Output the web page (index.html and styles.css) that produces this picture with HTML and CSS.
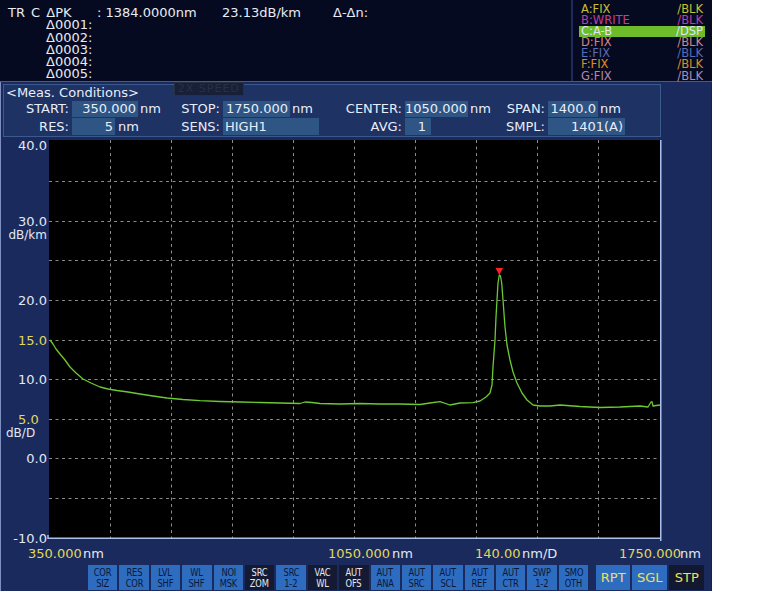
FILE: index.html
```html
<!DOCTYPE html>
<html>
<head>
<meta charset="utf-8">
<link rel="stylesheet" href="styles.css">
</head>
<body>
<div class="screen">
  <header class="top">
    <div class="markers">
      <div class="mrow"><span class="m1">TR C ΔPK</span><span class="m2">: 1384.0000nm</span><span class="m3">23.13dB/km</span><span>Δ-Δn:</span></div>
      <div class="mrow sub">Δ0001:</div>
      <div class="mrow sub">Δ0002:</div>
      <div class="mrow sub">Δ0003:</div>
      <div class="mrow sub">Δ0004:</div>
      <div class="mrow sub">Δ0005:</div>
    </div>
    <div class="traces">
      <div class="tr ta"><span>A:FIX</span><span>/BLK</span></div>
      <div class="tr tb"><span>B:WRITE</span><span>/BLK</span></div>
      <div class="tr tc"><span>C:A-B</span><span>/DSP</span></div>
      <div class="tr td"><span>D:FIX</span><span>/BLK</span></div>
      <div class="tr te"><span>E:FIX</span><span>/BLK</span></div>
      <div class="tr tf"><span>F:FIX</span><span>/BLK</span></div>
      <div class="tr tg"><span>G:FIX</span><span>/BLK</span></div>
    </div>
  </header>

  <section class="cond">
    <div class="ctitle"><span>&lt;Meas. Conditions&gt;</span><span class="speed">2X SPEED</span></div>
    <div class="crow row1">
      <span class="lab">START:</span><span class="val">350.000</span><span class="unit">nm</span>
      <span class="lab">STOP:</span><span class="val">1750.000</span><span class="unit">nm</span>
      <span class="lab">CENTER:</span><span class="val">1050.000</span><span class="unit">nm</span>
      <span class="lab">SPAN:</span><span class="val">1400.0</span><span class="unit">nm</span>
    </div>
    <div class="crow row2">
      <span class="lab">RES:</span><span class="val">5</span><span class="unit">nm</span>
      <span class="lab">SENS:</span><span class="val left">HIGH1</span>
      <span class="lab">AVG:</span><span class="val center">1</span>
      <span class="lab">SMPL:</span><span class="val">1401(A)</span>
    </div>
  </section>

  <svg class="chart" width="712" height="425" viewBox="0 0 712 425">
    <g transform="translate(0,2)">
    <rect class="plotbg" x="49" y="0" width="611" height="398"/>
    <path class="grid" d="M49 41.5H660M49 81.5H660M49 120.5H660M49 160.5H660M49 200.5H660M49 239.5H660M49 279.5H660M49 318.5H660M49 358.5H660"/>
    <path class="grid" d="M110.5 0V398M171.5 0V398M232.5 0V398M293.5 0V398M354.5 0V398M415.5 0V398M476.5 0V398M537.5 0V398M598.5 0V398"/>
    <polyline class="trace" points="50,200 53,204 56,209 60,214 65,220 70,227 76,233 83,239 91,243 100,247 108,249 117,250.5 128,252 140,254 153,256 167,258 183,259.5 200,260.7 220,261.5 240,262 260,262.5 280,263 300,263.5 305,262 312,262.5 320,263.5 340,264 360,263.5 380,264 400,264 420,264.5 430,263 440,261.7 450,265 460,263 473,262.7 480,261 486,257 490,253 492,245 493,227 495,200 496,177 497,160 498,143 499.3,135 500.5,136 501.7,143 503,160 505,187 507,205 510,220 513,232 517,243 522,253 527,260 533,265 540,266 550,266 560,265 580,266.5 600,267.5 620,267 640,266 648,267 651,262 652,261.7 653,266 660,265"/>
    <polygon class="mark" points="495.5,128 503,128 499.3,135"/>
    <path class="frame" d="M660.75 0V401"/>
    <path class="frame" d="M48 395V398.25H661"/>

    <text class="yl" x="47" y="9.7">40.0</text>
    <text class="yl" x="47" y="85.7">30.0</text>
    <text class="yu" x="47" y="98.7">dB/km</text>
    <text class="yl" x="47" y="164.7">20.0</text>
    <text class="yl yel" x="47" y="204.7">15.0</text>
    <text class="yl" x="47" y="244.2">10.0</text>
    <text class="ys yel" x="18" y="283.7">5.0</text>
    <text class="ys small" x="6" y="296.7">dB/D</text>
    <text class="yl" x="47" y="322.7">0.0</text>
    <text class="yl" x="47" y="402.7">-10.0</text>

    <text class="xl" y="417.7"><tspan class="yel" x="28">350.000</tspan><tspan x="83">nm</tspan></text>
    <text class="xl" y="417.7"><tspan class="yel" x="328">1050.000</tspan><tspan x="392">nm</tspan></text>
    <text class="xl" y="417.7"><tspan class="yel" x="475">140.00</tspan><tspan x="522">nm/D</tspan></text>
    <text class="xl" y="417.7"><tspan class="yel" x="619">1750.000</tspan><tspan x="680">nm</tspan></text>
    </g>
  </svg>

  <nav class="btnrow">
    <div class="btn"><span>COR</span><span>SIZ</span></div>
    <div class="btn"><span>RES</span><span>COR</span></div>
    <div class="btn"><span>LVL</span><span>SHF</span></div>
    <div class="btn"><span>WL</span><span>SHF</span></div>
    <div class="btn"><span>NOI</span><span>MSK</span></div>
    <div class="btn dark"><span>SRC</span><span>ZOM</span></div>
    <div class="btn"><span>SRC</span><span>1-2</span></div>
    <div class="btn dark"><span>VAC</span><span>WL</span></div>
    <div class="btn dark"><span>AUT</span><span>OFS</span></div>
    <div class="btn"><span>AUT</span><span>ANA</span></div>
    <div class="btn"><span>AUT</span><span>SRC</span></div>
    <div class="btn"><span>AUT</span><span>SCL</span></div>
    <div class="btn"><span>AUT</span><span>REF</span></div>
    <div class="btn"><span>AUT</span><span>CTR</span></div>
    <div class="btn"><span>SWP</span><span>1-2</span></div>
    <div class="btn"><span>SMO</span><span>OTH</span></div>
    <div class="big rpt">RPT</div>
    <div class="big">SGL</div>
    <div class="big dark">STP</div>
  </nav>
</div>
</body>
</html>
```

FILE: styles.css
```css
* { box-sizing: border-box; margin: 0; padding: 0; }

body {
  background: #ffffff;
  width: 782px;
  height: 592px;
  overflow: hidden;
  font-family: "DejaVu Sans", Verdana, sans-serif;
}

.screen {
  width: 712px;
  height: 591px;
  background: #1a2a5c;
  box-shadow: inset 1px 0 0 #7d8fbf, inset -1px 0 0 #16224a;
  display: flex;
  flex-direction: column;
}

/* ---------- header ---------- */
.top {
  display: flex;
  height: 82px;
  flex: none;
  background: #0a1132;
  border-bottom: 1px solid #3f5b8f;
}

.markers {
  width: 573px;
  background: #060a20;
  border-right: 2px solid #1d2b58;
  color: #e8ecf4;
  font-size: 13px;
  line-height: 12.3px;
  padding: 7px 0 0 8px;
}

.mrow { display: flex; white-space: pre; word-spacing: 2px; }
.m1 { width: 89px; }
.m2 { width: 125px; word-spacing: 0; }
.m3 { width: 111px; }
.sub { padding-left: 38px; }

.traces {
  flex: 1;
  padding: 4px 7px 0 6px;
  font-size: 11.5px;
  line-height: 11.1px;
  background: #060a20;
}

.tr {
  display: flex;
  justify-content: space-between;
  padding: 0 2px;
}
.ta { color: #c8c032; }
.tb { color: #c23c9e; }
.tc { background: #6cbc2c; color: #dfe8f2; }
.td { color: #d88282; }
.te { color: #5a6cb2; }
.tf { color: #e08a22; }
.tg { color: #b08ab0; }

/* ---------- measurement conditions ---------- */
.cond {
  flex: none;
  margin: 2px 0 0 3px;
  width: 658px;
  height: 53px;
  background: #1e3264;
  border: 1px solid #3b5b8f;
  color: #e8eef8;
  font-size: 13px;
}

.ctitle {
  display: flex;
  height: 15px;
  line-height: 15px;
  padding-left: 2px;
}

.speed {
  margin: -3px 0 0 35px;
  width: 70px;
  height: 14px;
  line-height: 12px;
  text-align: center;
  font-size: 11px;
  color: #283044;
  background: #172038;
  border: 1px solid #283044;
  letter-spacing: 1px;
}

.crow {
  display: grid;
  margin-top: 1px;
  line-height: 16px;
  white-space: nowrap;
}
.row1 {
  height: 16px;
  grid-template-columns: 68px 66px 22px 63px 67px 24px 91px 63px 24px 56px 50px auto;
}
.row2 {
  height: 17px;
  line-height: 17px;
  grid-template-columns: 68px 43px 23px 85px 96px 86px 26px 117px 77px;
}

.lab { text-align: right; padding-right: 3px; }
.val {
  background: #2e5584;
  text-align: right;
  padding-right: 2px;
}
.val.left { text-align: left; padding-left: 2px; }
.val.center { text-align: center; padding-left: 10px; }
.unit { padding-left: 2px; }
.row2 .unit { padding-left: 3px; }

/* ---------- chart ---------- */
.chart {
  display: block;
  flex: none;
  margin-top: 1px;
}
.plotbg { fill: #000000; }
.grid {
  stroke: #8a8a8a;
  stroke-width: 1;
  stroke-dasharray: 3 3.5;
  fill: none;
}
.trace {
  fill: none;
  stroke: #6cc830;
  stroke-width: 1.3;
  stroke-linejoin: round;
}
.mark { fill: #ff2222; }
.frame {
  fill: none;
  stroke: #a9c1ec;
  stroke-width: 1.5;
}

.yl, .yu, .ys, .xl {
  font-family: "DejaVu Sans", Verdana, sans-serif;
  fill: #e4e8f2;
}
.yl { font-size: 13px; text-anchor: end; }
.yu { font-size: 12px; text-anchor: end; }
.ys { font-size: 13px; }
.ys.small { font-size: 12px; }
.xl { font-size: 13px; }
.yel { fill: #e2d95a; }

/* ---------- soft keys ---------- */
.btnrow {
  display: flex;
  flex: none;
  height: 25px;
  margin-top: 2px;
  padding-left: 88px;
  gap: 2px;
}

.btn {
  width: 29.4px;
  height: 25px;
  background: #2e6cc0;
  color: #0a1838;
  font-family: "DejaVu Sans Condensed", "DejaVu Sans", sans-serif;
  font-size: 11px;
  line-height: 11.5px;
  letter-spacing: -0.2px;
  display: flex;
  flex-direction: column;
  align-items: center;
  justify-content: center;
  padding-top: 1px;
}
.btn span { display: block; transform: scaleX(0.84); }
.btn.dark { background: #141a34; color: #e6eaf2; }

.big {
  width: 35px;
  height: 25px;
  background: #2e6cc0;
  color: #f0e052;
  font-size: 13px;
  line-height: 25px;
  text-align: center;
}
.big.rpt { width: 34px; margin-left: 6px; }
.big.dark { background: #121830; }
```
